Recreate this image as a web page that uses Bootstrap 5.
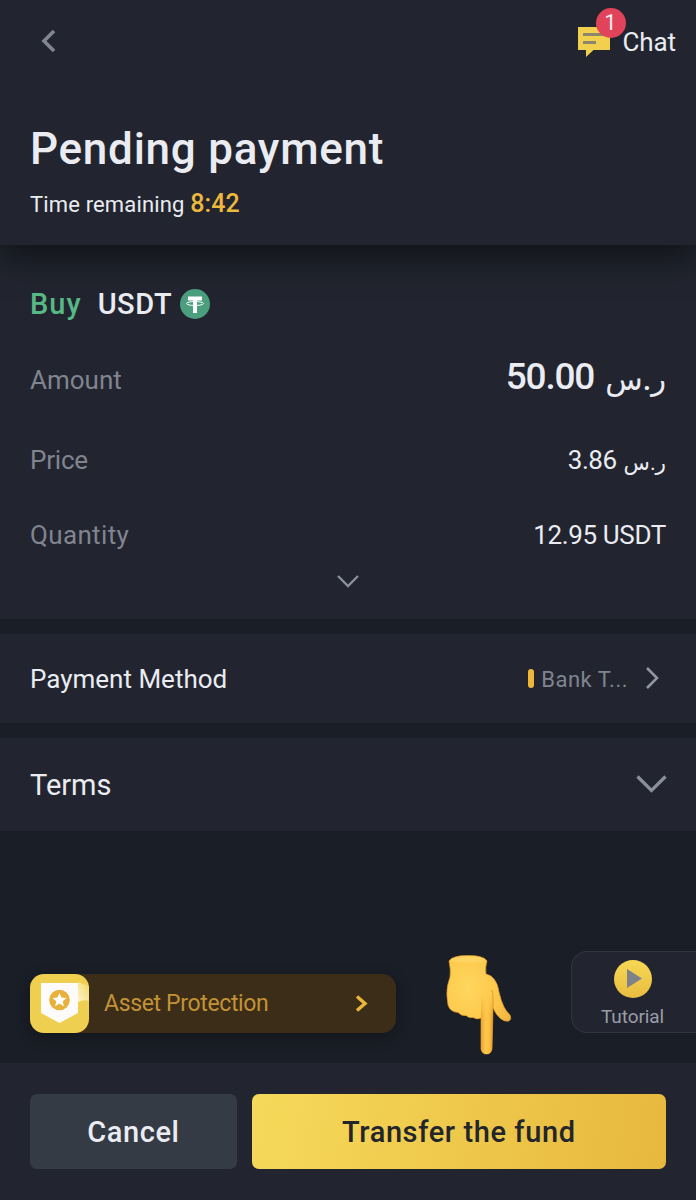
<!DOCTYPE html>
<html lang="en">
<head>
<meta charset="utf-8">
<meta name="viewport" content="width=device-width, initial-scale=1">
<title>Pending payment</title>
<link href="https://cdn.jsdelivr.net/npm/bootstrap@5.3.0/dist/css/bootstrap.min.css" rel="stylesheet">
<style>
body{background:#1a1e26;color:#eaecf2;font-family:Roboto,"DejaVu Sans",sans-serif;height:1200px;overflow:hidden}
.surface{background:#22252f}
.muted{color:#80848f}
.px-page{padding-left:30px;padding-right:30px}
.top{height:245px;position:relative;z-index:1;box-shadow:0 12px 30px rgba(8,10,14,.66)}
.top-nav{height:84px;padding:0 20px 0 40px}
.title{font-size:44px;line-height:52px;font-weight:500;letter-spacing:.75px;margin:39px 0 0}
.timer{font-size:22px;line-height:30px;letter-spacing:.15px;margin-top:14px}
.timer b{font-size:25px;font-weight:500;color:#ecb93c;letter-spacing:.1px}
.chat{font-size:26px;line-height:32px;letter-spacing:-.1px}
.chat-icon{width:29px}
.count{width:30px;height:30px;left:18px;top:-19px;background:#e0435a;font-size:22px;line-height:30px}
.order{height:374px}
.asset{font-size:29px;line-height:40px;font-weight:500;padding-top:39px;letter-spacing:.5px}
.buy{color:#57b985;letter-spacing:1px;margin-right:16px}
.line{font-size:26px;height:36px;line-height:36px}
.line-amount{margin-top:38px}
.line-price{margin-top:44px}
.line-qty{margin-top:39px}
.price-label{letter-spacing:-.2px}
.qty-label{letter-spacing:.35px}
.qty{letter-spacing:-.35px}
.big{font-size:37px;font-weight:500;margin-top:-3px}
.big .num{letter-spacing:-1.200px;margin-right:11px}
.cur{font-size:.83em;padding-top:3px}
.price .num{letter-spacing:-.5px;margin-right:7px}
.gap15{height:15px}
.pay{height:89px;font-size:26px;padding-top:2px}
.bar{width:6px;height:19px;border-radius:3px;background:#edb83a;margin:0 7px 2px 0}
.bank{font-size:22px;letter-spacing:.5px}
.terms{height:93px;font-size:29px;padding-top:2px}
.tools{height:232px;padding-left:30px}
.protect{width:366px;height:59px;margin-top:143px;border-radius:14px;background:#3b2d18;color:#c39237;font-size:23px;letter-spacing:-.35px;box-shadow:0 4px 14px rgba(8,10,14,.4)}
.protect-label{margin-left:15px;padding-top:2px}
.tutorial{width:125px;height:82px;margin-top:120px;padding-right:3px;border:1.500px solid #30343e;border-right:0;border-radius:16px 0 0 16px;font-size:19px;line-height:24px;color:#999da7;letter-spacing:-.1px}
.actions{height:137px;padding-top:31px;gap:15px}
.act{height:75px;border-radius:7px;border:0;font-size:29px;font-weight:500;letter-spacing:.6px;padding:2px 0 0}
.cancel,.cancel:hover{width:207px;background:#353b45;color:#eaecf2}
.transfer,.transfer:hover{width:415px;background:linear-gradient(100deg,#f6d95a,#e7b83d);color:#22252b}
</style>
</head>
<body>
<header class="top surface">
  <nav class="top-nav d-flex align-items-center justify-content-between">
    <svg width="18" height="24" viewBox="0 0 18 24" fill="none" stroke="#808590" stroke-width="3.600"><path d="M14 1 4 11 14 21"/></svg>
    <div class="d-flex align-items-center chat">
      <div class="chat-icon position-relative me-3">
        <svg class="d-block" width="32" height="31" viewBox="0 0 32 31"><path fill="#f1cf4f" d="M0 0h32v23H15.500L8 30V23H0z"/><path fill="#8b8768" d="M5 6h21v3H5zM5 14h13v3H5z"/></svg>
        <span class="count position-absolute rounded-circle text-center">1</span>
      </div>
      <span>Chat</span>
    </div>
  </nav>
  <div class="px-page">
    <h1 class="title">Pending payment</h1>
    <div class="timer"><span>Time remaining</span> <b>8:42</b></div>
  </div>
</header>
<main>
  <section class="order surface px-page">
    <div class="asset d-flex align-items-center">
      <span class="buy">Buy</span><span>USDT</span>
      <svg class="ms-2" width="30" height="30" viewBox="0 0 30 30"><circle cx="15" cy="15" r="15" fill="#4b9e7e"/><path fill="#fff" d="M8 7.500h14v4h-5V24h-4V11.500H8z"/><ellipse cx="15" cy="14.500" rx="8.500" ry="2" fill="none" stroke="#fff"/></svg>
    </div>
    <div class="line line-amount d-flex justify-content-between align-items-center"><span class="muted">Amount</span><span class="big d-flex"><span class="num">50.00</span> <span class="cur">ر.س</span></span></div>
    <div class="line line-price d-flex justify-content-between"><span class="muted price-label">Price</span><span class="price d-flex"><span class="num">3.86</span> <span class="cur">ر.س</span></span></div>
    <div class="line line-qty d-flex justify-content-between"><span class="muted qty-label">Quantity</span><span class="qty">12.95 USDT</span></div>
    <svg class="d-block mx-auto" style="margin-top:22px" width="24" height="14" viewBox="0 0 24 14" fill="none" stroke="#8b8f99" stroke-width="2.400"><path d="m2 1 10 10L22 1"/></svg>
  </section>
  <div class="gap15"></div>
  <section class="pay surface px-page d-flex align-items-center">
    <span class="me-auto">Payment Method</span>
    <span class="bar"></span><span class="bank muted">Bank T...</span>
    <svg style="margin:0 6px 3px 17px" width="15" height="24" viewBox="0 0 15 24" fill="none" stroke="#9296a0" stroke-width="2.600"><path d="m2 2 10 10L2 22"/></svg>
  </section>
  <div class="gap15"></div>
  <section class="terms surface px-page d-flex align-items-center justify-content-between">
    <span>Terms</span>
    <svg style="margin:0 -1px 1px 0" width="31" height="20" viewBox="0 0 31 20" fill="none" stroke="#8b8f99" stroke-width="3.200"><path d="m1.500 1.500 14 14 14-14"/></svg>
  </section>
  <section class="tools d-flex align-items-start">
    <div class="protect d-flex align-items-center">
      <svg width="59" height="59" viewBox="0 0 59 59"><defs><linearGradient id="shine" x1="0" x2="1" y1="1" y2="0"><stop stop-color="#fff4cc"/><stop offset="1" stop-color="#f3d765"/></linearGradient></defs><rect width="59" height="59" rx="14" fill="#efcf50"/><path fill="url(#shine)" d="M48 8 59 12v15q-6-2-11 1z"/><path fill="#fcfbf9" d="M11 9h37v30L29.500 49 11 39z"/><circle cx="29.500" cy="26" r="10.300" fill="#e8b13d"/><path fill="#fff" d="m29.500 19 2 4.600 5 .4-3.800 3.300 1.200 4.900-4.400-2.600-4.400 2.600 1.200-4.900-3.800-3.300 5-.4z"/></svg>
      <span class="protect-label">Asset Protection</span>
      <svg class="ms-auto" style="margin-right:27px" width="14" height="18" viewBox="0 0 14 18" fill="none" stroke="#ebb63a" stroke-width="3.400"><path d="m2 1.500 8 7-8 7"/></svg>
    </div>
    <svg style="margin:124px 0 0 50px" width="68" height="102" viewBox="0 0 68 102">
      <defs>
        <radialGradient id="palm" gradientUnits="userSpaceOnUse" cx="22" cy="32" r="54" gradientTransform="matrix(1 0 0 1.200 0 -6)"><stop stop-color="#ffd65e"/><stop offset=".5" stop-color="#fdca4c"/><stop offset="1" stop-color="#f2b03b"/></radialGradient>
        <linearGradient id="finger"><stop stop-color="#e9a433"/><stop offset=".4" stop-color="#ffc84b"/><stop offset=".7" stop-color="#fbbf42"/><stop offset="1" stop-color="#df942d"/></linearGradient>
        <linearGradient id="fade" x2="0" y2="1"><stop stop-color="#fff" stop-opacity="0"/><stop offset=".4" stop-color="#fff"/></linearGradient>
        <mask id="finger-mask" maskUnits="userSpaceOnUse" x="34" y="40" width="14" height="62"><path fill="url(#fade)" d="M34 40h14v62H34z"/></mask>
      </defs>
      <path fill="url(#palm)" stroke="#dd972f" stroke-width=".7" d="M3 6Q6 .5 22 .5T41 6q-2 6-1 13 5 1 8 5 4 5 5 13 2 9 5 15 2 4 6 8 2 4-1 6-4 1-8-2-5-4-8-11L46 94q-1 5-5.500 5T35 94V63q-4 2-8-.500-4 1-7-2-4 1-8-3Q4 57 2 50 0 39 1.500 31 3 25 4 22 5 15 3 6z"/>
      <path fill="url(#finger)" mask="url(#finger-mask)" d="M35 40h12l-1 54q-1 5-5.500 5T35 94z"/>
      <path fill="none" stroke="#dc962f" stroke-width="1.200" opacity=".7" d="M46 35q2 8 1 19"/>
      <path fill="#ffdc72" d="M4 6q4-5 18-5t18 5q-17 3-36 0z" opacity=".55"/>
    </svg>
    <div class="tutorial surface ms-auto d-flex flex-column align-items-center">
      <svg style="margin-top:8px" width="38" height="38" viewBox="0 0 38 38"><defs><linearGradient id="sun" x2="0" y2="1"><stop stop-color="#f6d854"/><stop offset="1" stop-color="#e9bd40"/></linearGradient></defs><circle cx="19" cy="19" r="19" fill="url(#sun)"/><path fill="#7e818a" d="m13 9 15 9.500L13 28z"/></svg>
      <span style="margin-top:7px">Tutorial</span>
    </div>
  </section>
</main>
<footer class="actions surface px-page d-flex">
  <button class="btn act cancel">Cancel</button>
  <button class="btn act transfer">Transfer the fund</button>
</footer>
<script src="https://cdn.jsdelivr.net/npm/bootstrap@5.3.0/dist/js/bootstrap.bundle.min.js"></script>
</body>
</html>
